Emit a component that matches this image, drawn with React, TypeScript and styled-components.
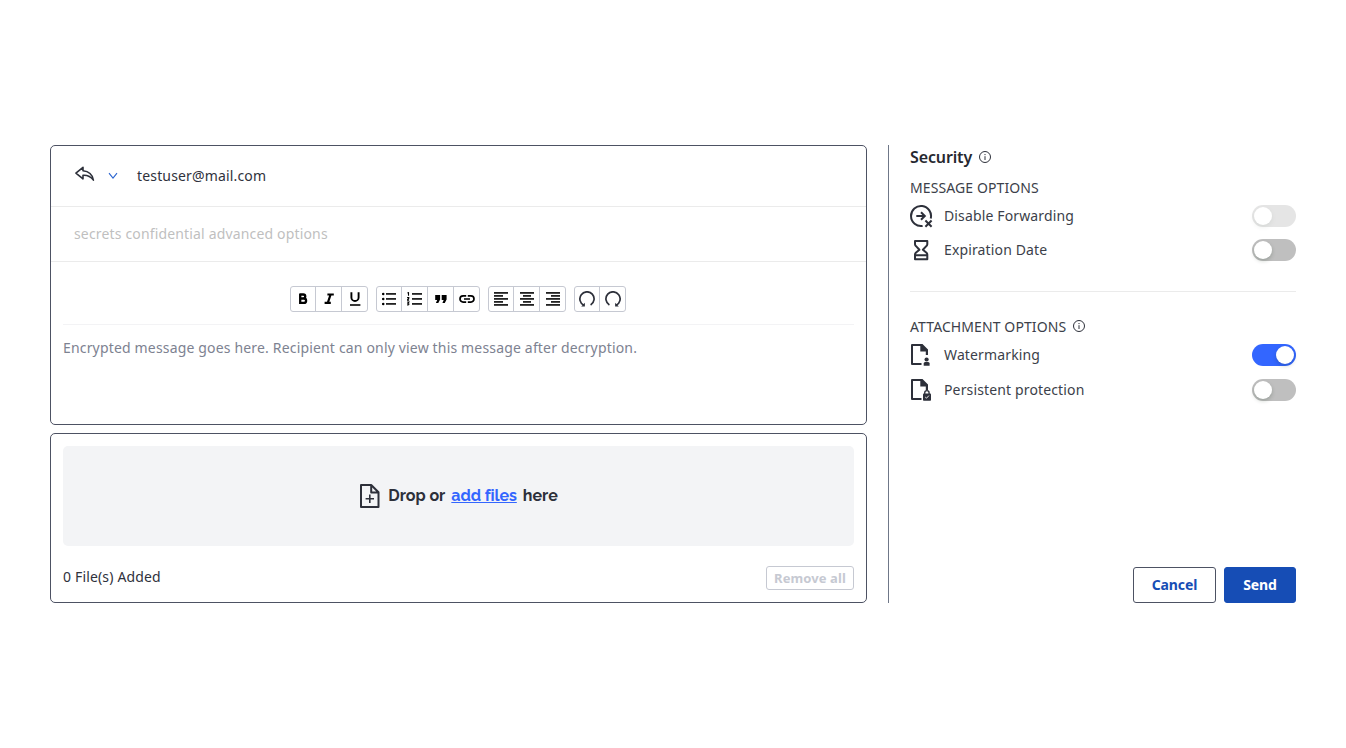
import React, { useState } from 'react';
import styled, { createGlobalStyle } from 'styled-components';

const GlobalStyle = createGlobalStyle`
  * { box-sizing: border-box; }
  body {
    margin: 0;
    background: #fff;
    color: #2f323c;
    font-family: "Noto Sans", sans-serif;
    font-size: 14px;
    line-height: 20px;
    letter-spacing: 0.16px;
  }
  svg { display: block; flex: none; }
  button { font-family: inherit; cursor: pointer; }
`;

const Page = styled.main`
  display: flex;
  width: 1346px;
  height: 748px;
  padding: 145px 50px;
`;

const Compose = styled.section`
  display: flex;
  flex-direction: column;
  gap: 8px;
  width: 817px;
`;

const Card = styled.div<{ $height: number }>`
  height: ${(p) => p.$height}px;
  border: 1px solid #4d5263;
  border-radius: 5px;
`;

const RecipientRow = styled.div`
  display: flex;
  align-items: center;
  height: 61px;
  padding-left: 23px;
  border-bottom: 1px solid #ebebeb;
`;

const ReplyIcon = styled.svg`
  margin-bottom: 4px;
`;

const Chevron = styled.svg`
  margin: 0 19px 0 13px;
`;

const SubjectRow = styled.div`
  display: flex;
  align-items: center;
  height: 55px;
  padding-left: 23px;
  border-bottom: 1px solid #ebebeb;
  color: #bfbfbf;
`;

const Editor = styled.div`
  padding: 0 12px;
`;

const Toolbar = styled.div`
  display: flex;
  justify-content: center;
  gap: 8px;
  height: 63px;
  padding: 24px 1px 0 0;
  border-bottom: 1px solid #f3f3f5;
`;

const ToolGroup = styled.div`
  display: flex;
  height: 26px;
  border: 1px solid #c6c9d2;
  border-radius: 3px;
`;

const Tool = styled.button`
  display: flex;
  align-items: center;
  justify-content: center;
  width: 26px;
  height: 24px;
  padding: 0;
  border: 0;
  border-right: 1px solid #c6c9d2;
  background: transparent;
  color: #000;
  &:first-child { width: 25px; }
  &:last-child { border-right: 0; width: 25px; }
`;

const MessageBody = styled.div`
  padding-top: 13px;
  color: #7d8291;
  letter-spacing: 0.168px;
`;

const Attachments = styled(Card)`
  padding: 12px;
`;

const DropZone = styled.div`
  display: flex;
  align-items: center;
  justify-content: center;
  height: 100px;
  border-radius: 5px;
  background: #f3f4f6;
  color: #2d303a;
  font: 700 16px/20px Raleway, Lato, sans-serif;
  letter-spacing: 0;
`;

const DropText = styled.span`
  margin-left: 8px;
  white-space: nowrap;
`;

const AddFiles = styled.a`
  margin: 0 6px;
  color: #3366ff;
  letter-spacing: -0.08px;
  text-decoration: underline;
`;

const AttachmentFooter = styled.div`
  display: flex;
  justify-content: space-between;
  margin-top: 20px;
`;

const RemoveAll = styled.button`
  width: 88px;
  height: 24px;
  padding: 0;
  border: 1px solid #c6c9d2;
  border-radius: 3px;
  background: #fff;
  color: #c6c9d2;
  font-size: 13px;
  font-weight: 700;
  line-height: 20px;
  letter-spacing: 0.1px;
`;

const FileCount = styled.span`
  line-height: 22px;
`;

const Sidebar = styled.aside`
  display: flex;
  flex-direction: column;
  width: 408px;
  height: 458px;
  margin-left: 21px;
  padding-left: 21px;
  border-left: 1px solid #6f7788;
`;

const Title = styled.h1`
  display: flex;
  align-items: center;
  gap: 7px;
  height: 24px;
  margin: 0;
  color: #26282f;
  font-size: 16px;
  font-weight: 600;
  line-height: 24px;
  letter-spacing: -0.13px;
`;

const GroupTitle = styled.h2<{ $top: number }>`
  display: flex;
  align-items: center;
  gap: 7px;
  height: 20px;
  margin: ${(p) => p.$top}px 0 0;
  color: #3c3f4a;
  font-size: 14px;
  font-weight: 400;
  letter-spacing: 0.1px;
  svg { margin-bottom: 2px; }
`;

const OptionRow = styled.div<{ $top: number }>`
  display: flex;
  align-items: center;
  height: 22px;
  margin-top: ${(p) => p.$top}px;
`;

const OptionLabel = styled.span`
  flex: 1;
  margin-left: 10px;
  color: #3c3f4a;
  letter-spacing: 0.14px;
`;

const Switch = styled.button<{ $on?: boolean }>`
  display: flex;
  justify-content: ${(p) => (p.$on ? 'flex-end' : 'flex-start')};
  width: 44px;
  height: 22px;
  padding: 2px;
  border: 0;
  border-radius: 11px;
  background: ${(p) => (p.$on ? '#3366ff' : '#bfbfbf')};
  &:disabled { opacity: 0.4; }
`;

const Knob = styled.span`
  width: 18px;
  height: 18px;
  border-radius: 9px;
  background: #fff;
  box-shadow: 0 2px 4px rgba(0, 35, 11, 0.2);
`;

const Divider = styled.hr`
  width: 100%;
  height: 1px;
  margin: 30px 0 0;
  border: 0;
  background: #ebebeb;
`;

const Actions = styled.div`
  display: flex;
  justify-content: flex-end;
  gap: 8px;
  margin-top: auto;
`;

const ActionButton = styled.button<{ $primary?: boolean }>`
  width: ${(p) => (p.$primary ? 72 : 83)}px;
  height: 36px;
  padding: 0 0 2px;
  border: 1px solid ${(p) => (p.$primary ? '#164db5' : '#4d5263')};
  border-radius: 3px;
  background: ${(p) => (p.$primary ? '#164db5' : '#fff')};
  color: ${(p) => (p.$primary ? '#fff' : '#164db5')};
  font-size: 14px;
  font-weight: 700;
  letter-spacing: -0.08px;
`;

const InfoIcon = () => (
  <svg width="12" height="12" viewBox="0 0 12 12" fill="none" stroke="#2d303a">
    <circle cx="6" cy="6" r="5.5" />
    <path d="M6 5.2V9M6 3v1.1" />
  </svg>
);

const lines = (rows: number[][]) => rows.map(([x, y, w]) => <rect key={y} x={x} y={y} width={w} height="1.8" />);

const toolIcons: Record<string, React.ReactNode> = {
  bold: (
    <svg width="14" height="14" viewBox="0 0 14 14" fill="none" stroke="currentColor" strokeWidth="2.3">
      <path d="M4 2.5h3.3a1.9 1.9 0 0 1 0 3.9H4M4 6.5h3.9a2.1 2.1 0 0 1 0 4.4H4M4.2 1.4V12" />
    </svg>
  ),
  italic: (
    <svg width="14" height="14" viewBox="0 0 14 14" fill="none" stroke="currentColor" strokeWidth="2.2">
      <path d="M5.4 2.5h6.4M2.6 10.9H8.8M8.6 2.5 5.8 10.9" />
    </svg>
  ),
  underline: (
    <svg width="14" height="14" viewBox="0 0 14 14" fill="none" stroke="currentColor">
      <path d="M3.4.2v5.2a3.6 3.6 0 0 0 7.2 0V.2" strokeWidth="1.9" />
      <path d="M2 13h10.4" stroke="#222" strokeWidth="1.8" />
    </svg>
  ),
  bullets: (
    <svg width="14" height="14" viewBox="0 0 14 14">
      {[2, 7, 12].map((y) => <circle key={y} cx="1.2" cy={y} r="1.3" />)}
      <g fill="#222">{lines([[4, 1, 10], [4, 6, 10], [4, 11, 10]])}</g>
    </svg>
  ),
  numbers: (
    <svg width="15" height="14" viewBox="0 0 15 14">
      <path d="M.4 1.1 1.5.7v3M.1 5.6h1.7v.8L.2 8.1h1.9M.2 10h1.7L1 11.2q1 .1.9 1.1-.5 1-1.8.4" fill="none" stroke="#000" strokeWidth="1.1" />
      <g fill="#222">{lines([[5, 1, 10], [5, 6, 10], [5, 11, 10]])}</g>
    </svg>
  ),
  quote: (
    <svg width="14" height="14" viewBox="0 0 14 14">
      <path d="M1.2 3.1h4.9v4.3L4.3 10.9H1.9l1.3-3H1.2zM7.7 3.1h4.9v4.3L10.8 10.9H8.4l1.3-3H7.7z" />
    </svg>
  ),
  link: (
    <svg width="16" height="10" viewBox="0 0 16 10" fill="none" stroke="currentColor" strokeWidth="1.7">
      <path d="M7.2 1.9H4.1a3.1 3.1 0 0 0 0 6.2h3.1M8.8 1.9h3.1a3.1 3.1 0 0 1 0 6.2H8.8M5 5h6" />
    </svg>
  ),
  left: <svg width="14" height="14" fill="#222">{lines([[0, 0, 14], [0, 3, 9], [0, 6, 14], [0, 9, 9], [0, 12, 14]])}</svg>,
  center: <svg width="14" height="14" fill="#222">{lines([[0, 0, 14], [3, 3, 8], [0, 6, 14], [3, 9, 8], [0, 12, 14]])}</svg>,
  right: <svg width="14" height="14" fill="#222">{lines([[0, 0, 14], [5, 3, 9], [0, 6, 14], [5, 9, 9], [0, 12, 14]])}</svg>,
  undo: (
    <svg width="16" height="16" viewBox="0 0 16 16" fill="none" stroke="#2d303a" strokeWidth="1.7">
      <path d="M4.9 14.3A7.1 7.1 0 1 1 11.6 14" />
      <path d="M2.2 15.6h3.7v-3.9z" fill="#2d303a" stroke="none" />
    </svg>
  ),
  redo: (
    <svg width="16" height="16" viewBox="0 0 16 16" fill="none" stroke="#2d303a" strokeWidth="1.7">
      <path d="M11.1 14.3A7.1 7.1 0 1 0 4.4 14" />
      <path d="M13.8 15.6h-3.7v-3.9z" fill="#2d303a" stroke="none" />
    </svg>
  ),
};

const toolGroups = [
  ['bold', 'italic', 'underline'],
  ['bullets', 'numbers', 'quote', 'link'],
  ['left', 'center', 'right'],
  ['undo', 'redo'],
];

const ForwardOffIcon = () => (
  <svg width="24" height="24" viewBox="0 0 24 24" fill="none" stroke="#2d303a" strokeWidth="2">
    <path d="M12.6 21.9A10 10 0 1 1 20.7 14.6" />
    <path d="M6.3 12h8.3M11 8.3l3.8 3.7-3.8 3.7" />
    <path d="m15.4 16.5 6.2 6.2M21.6 16.5l-6.2 6.2" />
  </svg>
);

const HourglassIcon = () => (
  <svg width="24" height="24" viewBox="0 0 24 24" fill="none" stroke="#2d303a" strokeWidth="2" strokeLinejoin="round">
    <path d="M5 3h12.3v3.2q0 1-.8 1.7L12.9 11.8l3.6 3q.8.8.8 1.8V21.2H5v-4.6q0-1 .8-1.8l3.6-3-3.6-3.9Q5 7.200 5 6.200zM5 17.200h12.300" />
  </svg>
);

const DocumentShape = () => (
  <>
    <path d="M11.500 21H2V2h9.500" stroke="#2d303a" strokeWidth="2" fill="none" strokeLinejoin="round" />
    <path d="M10.300 1h2.200L18 6.600V12h-2.200V8.600h-5.500z" fill="#2d303a" />
  </>
);

const WatermarkIcon = () => (
  <svg width="24" height="24" viewBox="0 0 24 24" fill="#2d303a">
    <DocumentShape />
    <circle cx="16.6" cy="16.5" r="2.1" />
    <path d="M13.700 22.700v-2.100q0-1.500 1.500-1.500h2.900q1.500 0 1.500 1.500v2.100z" />
  </svg>
);

const ProtectionIcon = () => (
  <svg width="24" height="24" viewBox="0 0 24 24" fill="#2d303a">
    <DocumentShape />
    <path d="M14.700 16.500v-1.600a2.200 2.200 0 0 1 4.400 0v1.600" fill="none" stroke="#2d303a" strokeWidth="1.3" />
    <rect x="13" y="15.500" width="8" height="7.200" rx=".8" />
    <path d="m15.200 19 1.300 1.200 2.400-2.600" fill="none" stroke="#fff" strokeWidth=".9" />
  </svg>
);

const AddDocumentIcon = () => (
  <svg width="21" height="24" viewBox="0 0 21 24" fill="none" stroke="#2d303a" strokeWidth="2" strokeLinejoin="round">
    <path d="M2 1h10.200l7.300 7.300V23H2zM12.200 1v7.500h7.300" />
    <path d="M10.800 10.500v8.400M6.600 14.700h8.400" strokeWidth="1.6" />
  </svg>
);

interface OptionProps {
  icon: React.ReactNode;
  label: string;
  top: number;
  initial?: boolean;
  disabled?: boolean;
}

const Option = ({ icon, label, top, initial = false, disabled }: OptionProps) => {
  const [on, setOn] = useState(initial);
  return (
    <OptionRow $top={top}>
      {icon}
      <OptionLabel>{label}</OptionLabel>
      <Switch role="switch" aria-label={label} aria-checked={on} $on={on} disabled={disabled} onClick={() => setOn(!on)}>
        <Knob />
      </Switch>
    </OptionRow>
  );
};

export default function App() {
  return (
    <>
      <GlobalStyle />
      <Page>
        <Compose>
          <Card $height={280}>
            <RecipientRow>
              <ReplyIcon width="21" height="16" viewBox="0 0 21 16" fill="none" stroke="#2d303a" strokeWidth="1.6" strokeLinejoin="round">
                <path d="M9 1.300 1.900 7.100 9 12.800V9.300c4.100-.3 7.800 1.300 10.400 4.800C18.500 9.200 14.900 5.300 9 4.800z" />
              </ReplyIcon>
              <Chevron width="10" height="8" viewBox="0 0 10 8" fill="none" stroke="#2c65d0" strokeWidth="1.1">
                <path d="m1 1.200 4 5 4-5" />
              </Chevron>
              <span>testuser@mail.com</span>
            </RecipientRow>
            <SubjectRow>secrets confidential advanced options</SubjectRow>
            <Editor>
              <Toolbar>
                {toolGroups.map((group) => (
                  <ToolGroup key={group[0]}>
                    {group.map((name) => <Tool key={name} aria-label={name}>{toolIcons[name]}</Tool>)}
                  </ToolGroup>
                ))}
              </Toolbar>
              <MessageBody>Encrypted message goes here. Recipient can only view this message after decryption.</MessageBody>
            </Editor>
          </Card>
          <Attachments $height={170}>
            <DropZone>
              <AddDocumentIcon />
              <DropText>Drop or<AddFiles>add files</AddFiles>here</DropText>
            </DropZone>
            <AttachmentFooter>
              <FileCount>0 File(s) Added</FileCount>
              <RemoveAll>Remove all</RemoveAll>
            </AttachmentFooter>
          </Attachments>
        </Compose>
        <Sidebar>
          <Title>Security<InfoIcon /></Title>
          <GroupTitle $top={9}>MESSAGE OPTIONS</GroupTitle>
          <Option icon={<ForwardOffIcon />} label="Disable Forwarding" top={7} disabled />
          <Option icon={<HourglassIcon />} label="Expiration Date" top={12} />
          <Divider />
          <GroupTitle $top={25}>ATTACHMENT OPTIONS<InfoIcon /></GroupTitle>
          <Option icon={<WatermarkIcon />} label="Watermarking" top={7} initial />
          <Option icon={<ProtectionIcon />} label="Persistent protection" top={13} />
          <Actions>
            <ActionButton>Cancel</ActionButton>
            <ActionButton $primary>Send</ActionButton>
          </Actions>
        </Sidebar>
      </Page>
    </>
  );
}
